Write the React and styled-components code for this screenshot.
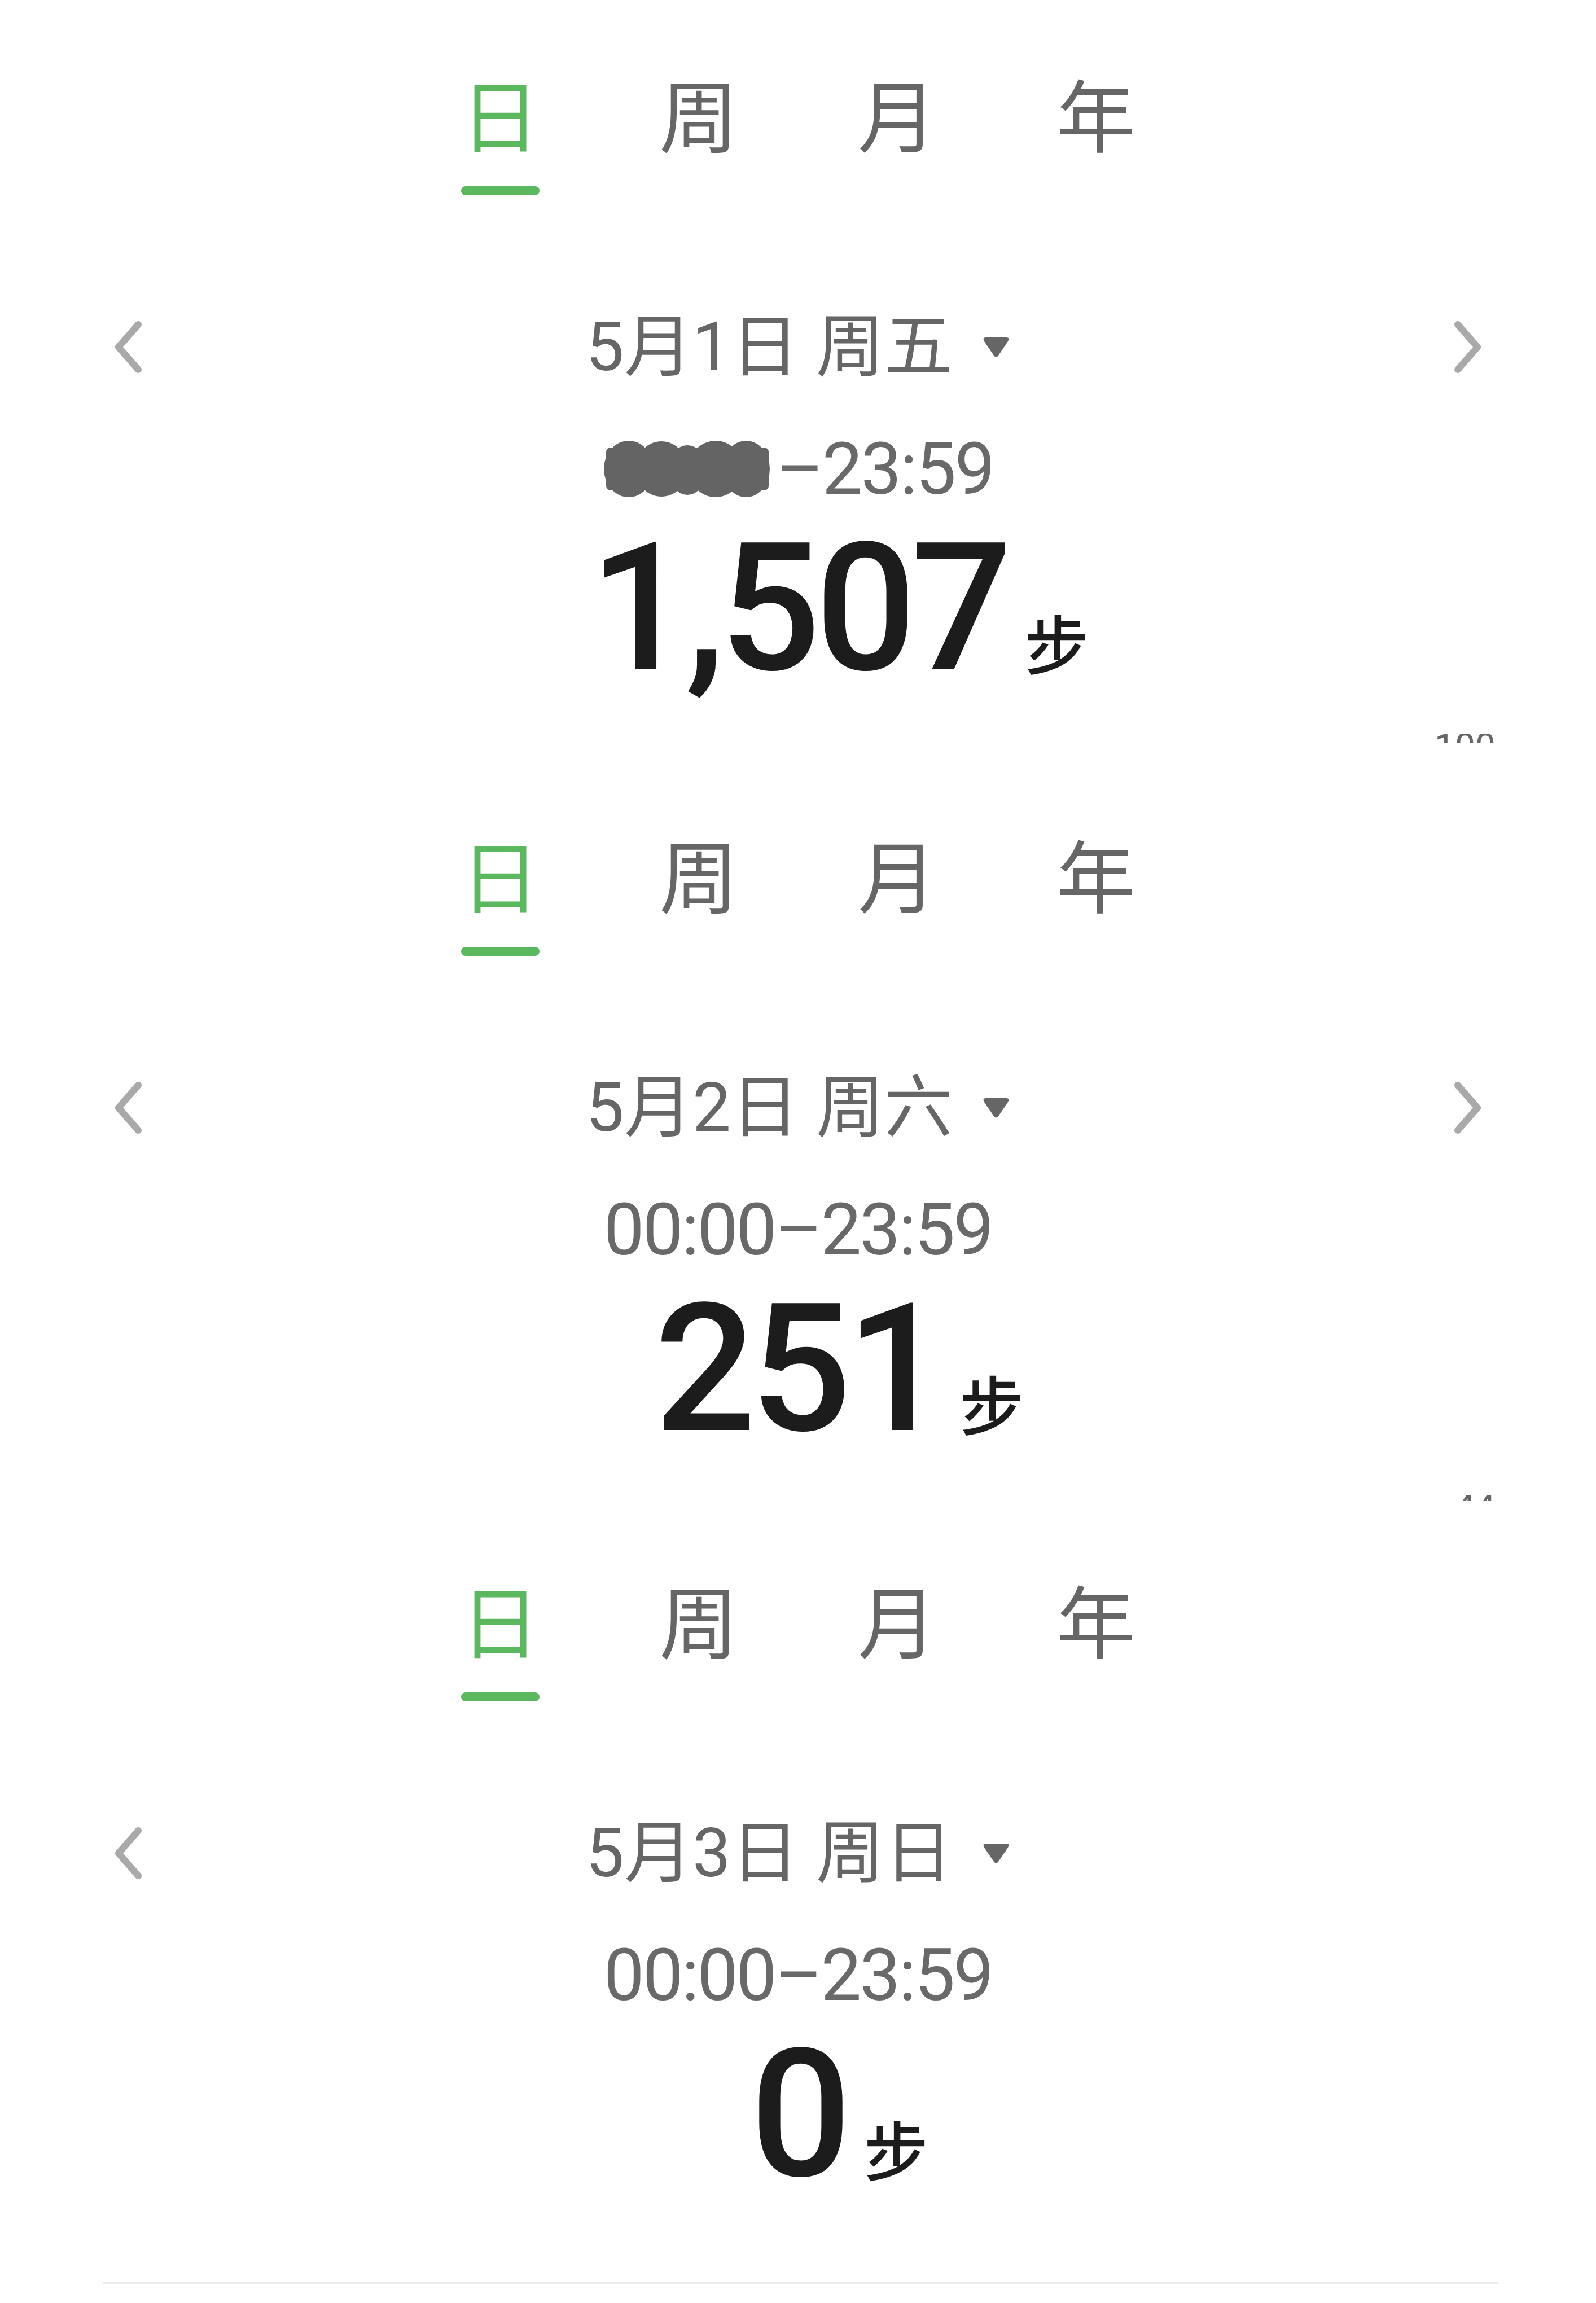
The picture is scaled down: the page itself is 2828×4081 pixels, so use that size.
import styled, { createGlobalStyle } from 'styled-components'

const GlobalStyle = createGlobalStyle`
  html, body {
    margin: 0;
    padding: 0;
    background: #ffffff;
  }
  body {
    font-family: Roboto, "Noto Sans CJK SC", sans-serif;
  }
`

const Page = styled.main`
  width: 2828px;
  height: 4081px;
  background: #ffffff;
  overflow: hidden;
`

const Panel = styled.section`
  box-sizing: border-box;
  height: ${(p) => p.$height}px;
  padding-top: ${(p) => p.$top}px;
  display: flex;
  flex-direction: column;
  overflow: hidden;
`

const TabBar = styled.div`
  display: flex;
  justify-content: center;
`

const Tab = styled.div`
  width: 352px;
  display: flex;
  flex-direction: column;
  align-items: center;
`

const TabLabel = styled.span`
  font-family: "Noto Sans CJK SC", sans-serif;
  font-size: 140px;
  line-height: 140px;
  color: ${(p) => (p.$active ? '#5cb85f' : '#666666')};
`

const TabUnderline = styled.div`
  margin-top: 62px;
  width: 139px;
  height: 16px;
  border-radius: 8px;
  background: ${(p) => (p.$active ? '#5cb85f' : 'transparent')};
`

const DateRow = styled.div`
  margin-top: 209px;
  height: 120px;
  padding: 0 198px;
  display: flex;
  align-items: center;
  justify-content: space-between;
`

const Chevron = styled.svg`
  width: 60px;
  height: 104px;
  visibility: ${(p) => (p.$hidden ? 'hidden' : 'visible')};
`

const DatePicker = styled.div`
  display: flex;
  align-items: center;
  gap: 52px;
`

const DateText = styled.span`
  font-family: Roboto, "Noto Sans CJK SC", sans-serif;
  font-size: 121px;
  line-height: 120px;
  color: #666666;
  white-space: pre;
`

const TimeRow = styled.div`
  margin-top: 91px;
  height: 130px;
  display: flex;
  align-items: center;
  justify-content: center;
`

const TimeText = styled.span`
  font-family: Roboto, sans-serif;
  font-size: 128px;
  line-height: 130px;
  color: #696969;
  letter-spacing: -3px;
`

const Redacted = styled.svg`
  width: 300px;
  height: 100px;
  margin-right: 8px;
`

const CountRow = styled.div`
  margin-top: 24px;
  display: grid;
  grid-template-columns: 1fr auto 1fr;
  align-items: baseline;
`

const CountValue = styled.span`
  grid-column: 2;
  font-family: Roboto, sans-serif;
  font-weight: 500;
  font-size: 316px;
  line-height: 316px;
  letter-spacing: -10px;
  color: #1c1c1c;
`

const CountUnit = styled.span`
  grid-column: 3;
  justify-self: start;
  margin-left: 32px;
  font-family: "Noto Sans CJK SC", sans-serif;
  font-weight: 500;
  font-size: 114px;
  color: #1c1c1c;
`

const AxisPeek = styled.div`
  margin-top: ${(p) => p.$gap}px;
  height: ${(p) => p.$height}px;
  padding-right: 178px;
  display: flex;
  justify-content: flex-end;
  overflow: hidden;
`

const AxisLabel = styled.span`
  display: block;
  margin-top: -9px;
  font-family: Roboto, sans-serif;
  font-size: 64px;
  line-height: 64px;
  color: #666666;
`

const Divider = styled.div`
  margin: 139px 0 0 182px;
  width: 2472px;
  height: 4px;
  background: #ececec;
`

function ChevronIcon({ dir, hidden }) {
  const d = dir === 'left' ? 'M47 12 L12 52 L47 92' : 'M13 12 L48 52 L13 92'
  return (
    <Chevron viewBox="0 0 60 104" $hidden={hidden}>
      <path d={d} fill="none" stroke="#a9a9a9" strokeWidth="12" strokeLinecap="round" strokeLinejoin="round" />
    </Chevron>
  )
}

function Caret() {
  return (
    <svg width="50" height="40" viewBox="0 0 50 40">
      <path d="M7 3 H43 Q50 3 46 10 L29 35 Q25 40 21 35 L4 10 Q0 3 7 3 Z" fill="#666666" />
    </svg>
  )
}

function Blur() {
  return (
    <Redacted viewBox="0 0 300 100">
      <g fill="#646464">
        <ellipse cx="46" cy="50" rx="44" ry="50" />
        <ellipse cx="104" cy="50" rx="46" ry="49" />
        <ellipse cx="150" cy="52" rx="34" ry="44" />
        <ellipse cx="200" cy="50" rx="48" ry="50" />
        <ellipse cx="254" cy="50" rx="42" ry="50" />
        <rect x="6" y="12" width="288" height="76" rx="8" />
      </g>
    </Redacted>
  )
}

const tabs = ['日', '周', '月', '年']

function DayPanel({ top, height, date, redacted, steps, peek, peekGap, peekHeight, last }) {
  return (
    <Panel $top={top} $height={height}>
      <TabBar>
        {tabs.map((t, i) => (
          <Tab key={t}>
            <TabLabel $active={i === 0}>{t}</TabLabel>
            <TabUnderline $active={i === 0} />
          </Tab>
        ))}
      </TabBar>
      <DateRow>
        <ChevronIcon dir="left" />
        <DatePicker>
          <DateText>{date}</DateText>
          <Caret />
        </DatePicker>
        <ChevronIcon dir="right" hidden={last} />
      </DateRow>
      <TimeRow>
        {redacted && <Blur />}
        <TimeText>{redacted ? '–23:59' : '00:00–23:59'}</TimeText>
      </TimeRow>
      <CountRow>
        <CountValue>{steps}</CountValue>
        <CountUnit>步</CountUnit>
      </CountRow>
      {peek && (
        <AxisPeek $gap={peekGap} $height={peekHeight}>
          <AxisLabel>{peek}</AxisLabel>
        </AxisPeek>
      )}
      {last && <Divider />}
    </Panel>
  )
}

export default function App() {
  return (
    <Page>
      <GlobalStyle />
      <DayPanel top={128} height={1318} date="5月1日 周五" redacted steps="1,507" peek="100" peekGap={65} peekHeight={15} />
      <DayPanel top={158} height={1348} date="5月2日 周六" steps="251" peek="44" peekGap={65} peekHeight={11} />
      <DayPanel top={131} height={1415} date="5月3日 周日" steps="0" last />
    </Page>
  )
}
